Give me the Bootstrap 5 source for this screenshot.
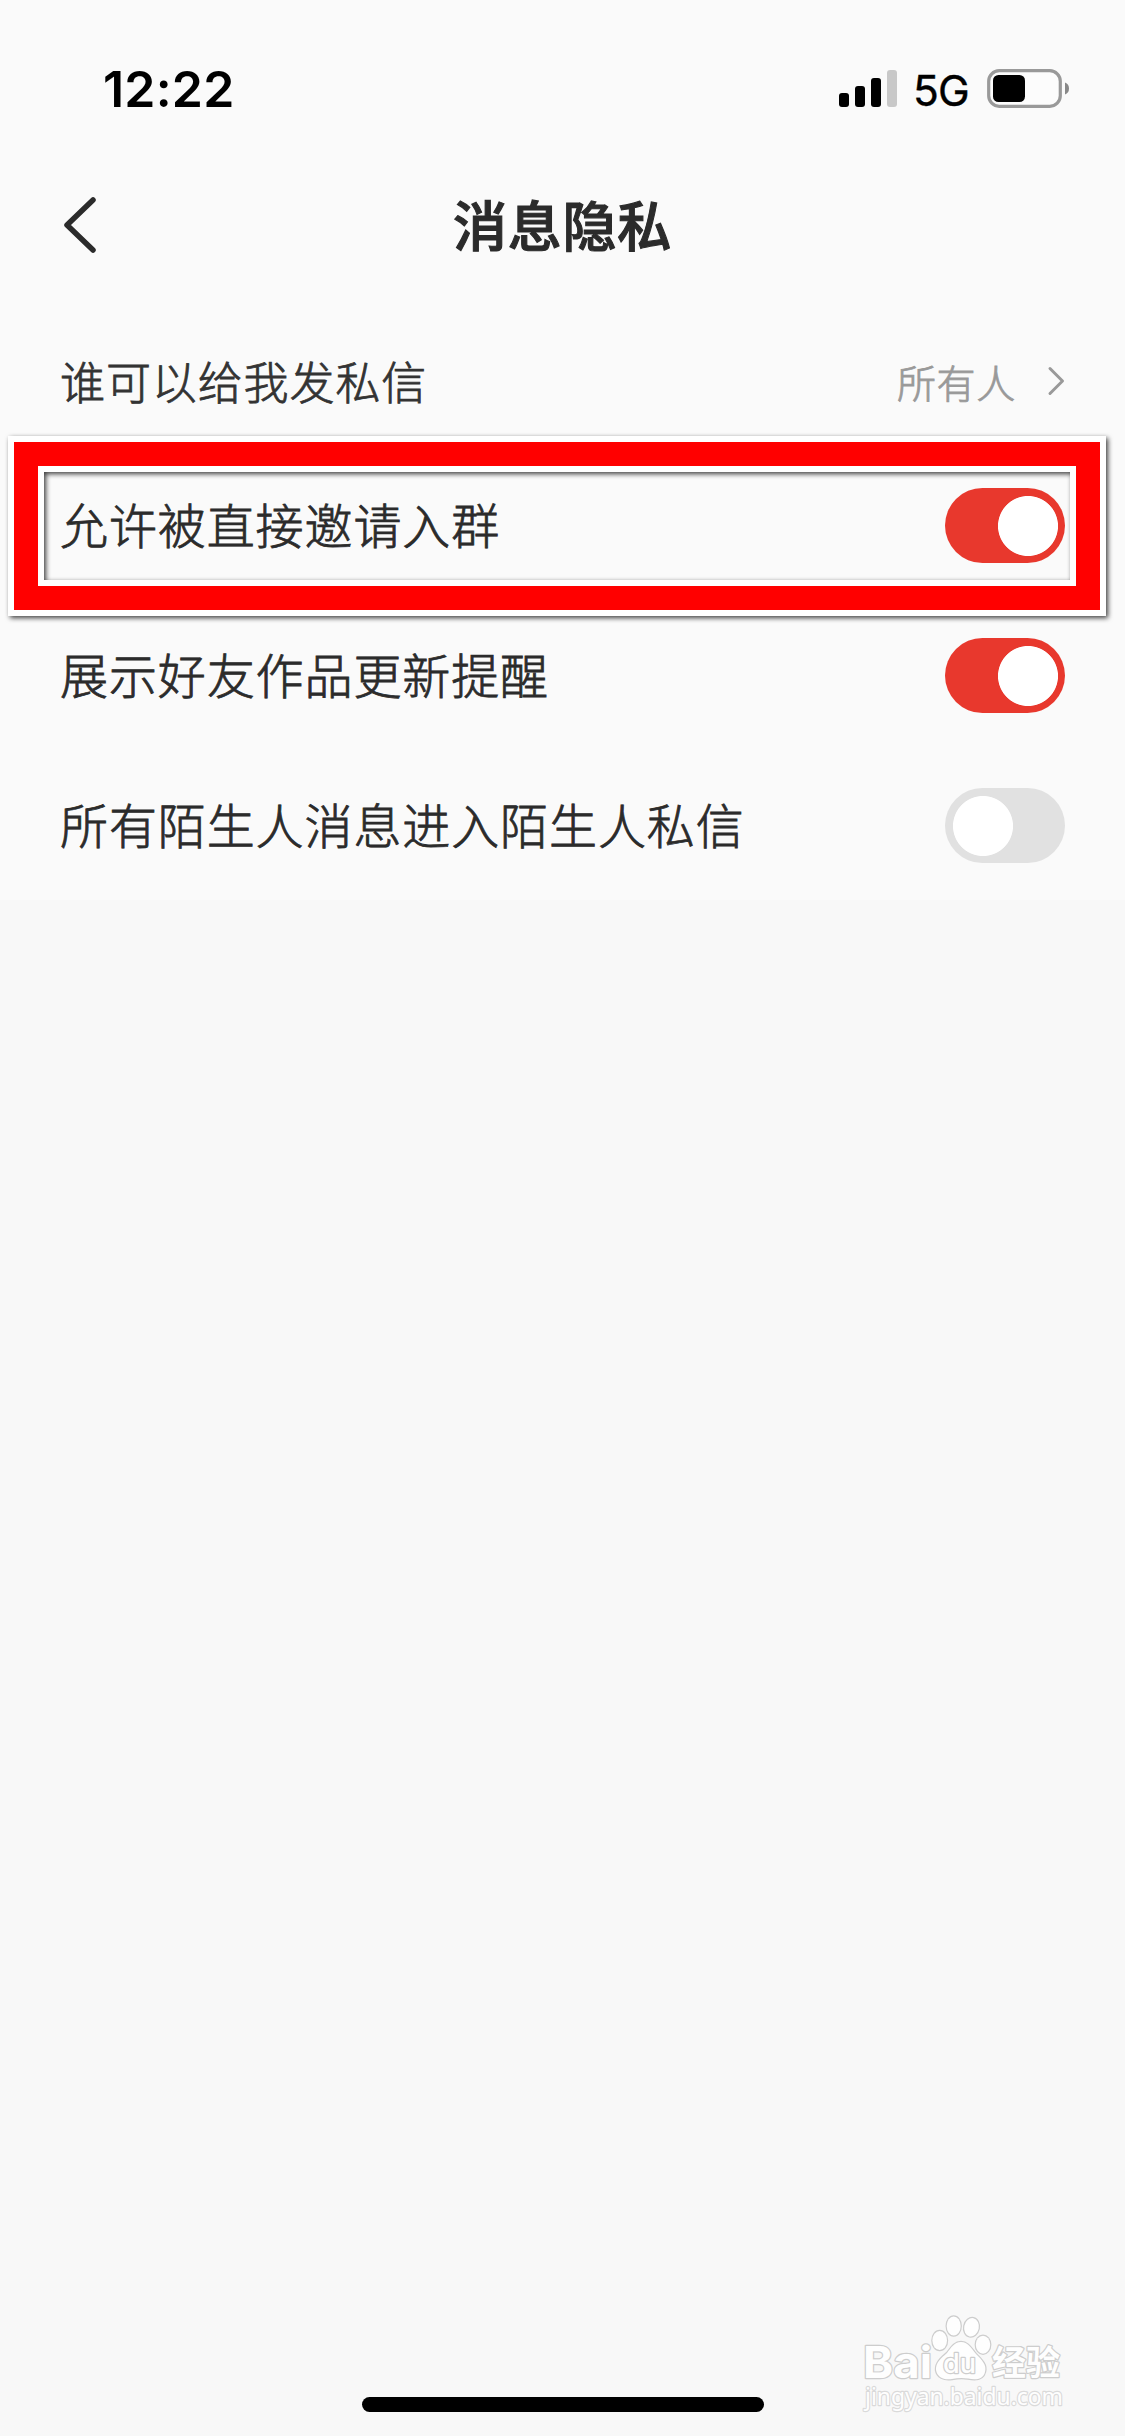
<!DOCTYPE html>
<html lang="zh-CN">
<head>
<meta charset="utf-8">
<meta name="viewport" content="width=device-width, initial-scale=1">
<title>消息隐私</title>
<link href="https://cdn.jsdelivr.net/npm/bootstrap@5.3.0/dist/css/bootstrap.min.css" rel="stylesheet">
<style>
  body { background: #f8f8f8; font-family: "Noto Sans CJK SC", sans-serif; color: #2b2b2b; }
  .screen { height: 2436px; }
  .panel { background: #fafafa; height: 900px; }
  .status { height: 150px; padding: 0 55px 0 103px; font-family: Inter, "Liberation Sans", sans-serif; color: #000; }
  .clock { font-size: 50px; font-weight: 600; line-height: 60px; letter-spacing: .2px; margin-top: 59px; }
  .indicators { margin-top: 69px; }
  .network { font-size: 42.5px; line-height: 50px; margin: -3px 17px 0 15px; letter-spacing: -.8px; -webkit-text-stroke: .4px; }
  .titlebar { height: 150px; padding: 0 60px; }
  .titlebar h1 { font-size: 54px; font-weight: 500; -webkit-text-stroke: 1.1px; letter-spacing: .8px; line-height: 80px; margin: 0 40px 2px 0; }
  .setting { height: 150px; padding: 0 60px 0 60px; font-size: 48px; letter-spacing: .9px; line-height: 70px; font-weight: 300; -webkit-text-stroke: .8px; }
  .setting > span { padding-bottom: 5px; }
  .setting.who { font-size: 45px; letter-spacing: .9px; color: #333; padding-top: 13px; }
  .setting.who > span { padding-bottom: 2px; }
  .who-value { font-size: 39px; letter-spacing: .7px; color: #999; }
  .form-check-input.toggle { width: 120px; height: 75px; margin: 0; border: 0; border-radius: 38px; background-color: #e1e1e1; background-image: radial-gradient(circle at 38px 38px, #fff 29.6px, transparent 30.4px) !important; background-size: 120px 75px; background-position: 0 0; }
  .form-check-input.toggle:checked { background-color: #e8382d; background-position: 0 0; background-image: radial-gradient(circle at 83px 38px, #fff 29.6px, transparent 30.4px) !important; }
  .marker { left: 8px; top: 436px; width: 1098px; height: 180px; border: 6px solid #fff; filter: drop-shadow(2px 2px 2.5px rgba(0,0,0,.75)); pointer-events: none; }
  .marker-red { border: 24px solid #f00; }
  .marker-inner { border: 6px solid #fff; }
  .home-bar { width: 402px; height: 15px; border-radius: 8px; background: #000; margin-bottom: 24px; }
  .watermark { left: 855px; top: 2308px; }
</style>
</head>
<body>
<main class="screen position-relative d-flex flex-column overflow-hidden">
  <section class="panel">
    <div class="status d-flex justify-content-between align-items-start">
      <span class="clock">12:22</span>
      <div class="indicators d-flex align-items-start">
        <svg width="59" height="45" viewBox="840 69 59 45">
          <rect x="840" y="93" width="10" height="14" rx="3"/><rect x="856" y="86" width="10" height="21" rx="3"/><rect x="872" y="78" width="10" height="29" rx="3"/><rect x="888" y="70" width="10" height="37" rx="3" fill="#c8c8c8"/>
        </svg>
        <span class="network">5G</span>
        <svg width="84" height="45" viewBox="986 69 84 45">
          <rect x="988.7" y="70.7" width="71.6" height="35.6" rx="10.5" fill="#fcfcfc" stroke="#999" stroke-width="3.2"/>
          <rect x="993" y="75" width="32" height="27" rx="5.5"/>
          <path d="M1065 82.500Q1069 84 1069 88.500Q1069 93 1065 94.500Z" fill="#888"/>
        </svg>
      </div>
    </div>
    <header class="titlebar d-flex align-items-center">
      <svg width="40" height="60" viewBox="60 195 40 60"><path d="M93 200L67 225L93 250" fill="none" stroke="#2b2b2b" stroke-width="5.500" stroke-linecap="round" stroke-linejoin="round"/></svg>
      <h1 class="flex-grow-1 text-center">消息隐私</h1>
    </header>
    <div class="setting who d-flex justify-content-between align-items-center">
      <span>谁可以给我发私信</span>
      <span class="d-flex align-items-center"><span class="who-value">所有人</span>
        <svg width="49" height="32" viewBox="1016 367 49 32"><path d="M1050 370.500L1062.500 383L1050 395.500" fill="none" stroke="#999" stroke-width="3" stroke-linecap="round" stroke-linejoin="round"/></svg></span>
    </div>
    <label class="setting d-flex justify-content-between align-items-center"><span>允许被直接邀请入群</span><input class="form-check-input toggle" type="checkbox" checked></label>
    <label class="setting d-flex justify-content-between align-items-center"><span>展示好友作品更新提醒</span><input class="form-check-input toggle" type="checkbox" checked></label>
    <label class="setting d-flex justify-content-between align-items-center"><span>所有陌生人消息进入陌生人私信</span><input class="form-check-input toggle" type="checkbox"></label>
  </section>
  <div class="home-bar mt-auto mx-auto"></div>

  <div class="marker position-absolute d-flex"><div class="marker-red d-flex flex-fill"><div class="marker-inner flex-fill"></div></div></div>

  <svg class="watermark position-absolute" width="220" height="110" viewBox="855 2308 220 110" fill="#fefefe" stroke="#cdcdcd" stroke-width="2.400" paint-order="stroke" stroke-linejoin="round">
    <text x="863" y="2377.500" font-family="Inter, sans-serif" font-weight="700" font-size="44" textLength="69" lengthAdjust="spacingAndGlyphs">Bai</text>
    <g stroke-width="2.400">
      <ellipse cx="939.700" cy="2340.500" rx="7.300" ry="9.500"/>
      <ellipse cx="953.700" cy="2326" rx="7" ry="9.500"/>
      <ellipse cx="971.500" cy="2327.300" rx="7.300" ry="9.300" transform="rotate(12 971.500 2327.300)"/>
      <ellipse cx="983" cy="2344.700" rx="7.200" ry="9"/>
      <path d="M961 2342C968 2342 971 2348 976 2354C982 2360 987 2365 985 2372C983 2380 975 2380 968 2378.500C962 2377.500 957 2378 952 2379C944 2380.500 937 2377 936 2370C935.500 2363 941 2358 947 2353C951 2348 954 2342 961 2342Z"/>
    </g>
    <text x="943" y="2373" font-family="Inter, sans-serif" font-weight="500" font-size="27" textLength="33" lengthAdjust="spacingAndGlyphs">du</text>
    <text x="992" y="2374.500" font-family="Noto Sans CJK SC, sans-serif" font-weight="700" font-size="34" textLength="68" lengthAdjust="spacingAndGlyphs">经验</text>
    <text x="865" y="2404.500" font-family="Noto Sans, sans-serif" font-size="24" textLength="198" lengthAdjust="spacingAndGlyphs" stroke="#dadada">jingyan.baidu.com</text>
  </svg>
</main>
<script src="https://cdn.jsdelivr.net/npm/bootstrap@5.3.0/dist/js/bootstrap.bundle.min.js"></script>
</body>
</html>
